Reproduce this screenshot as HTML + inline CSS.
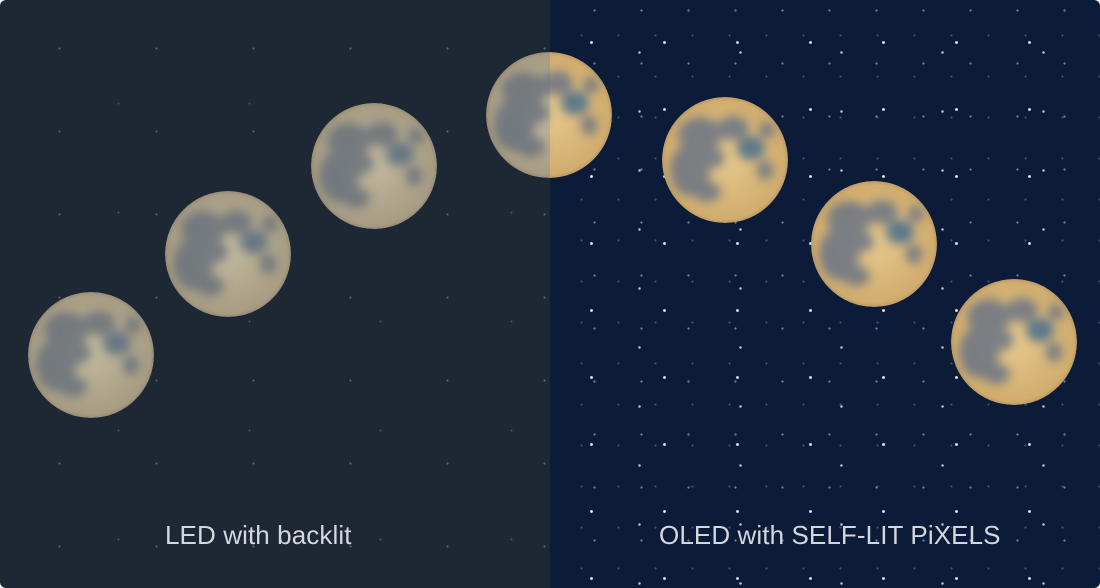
<!DOCTYPE html>
<html><head><meta charset="utf-8"><style>
html,body{margin:0;padding:0;width:1100px;height:588px;overflow:hidden;background:#fff}
.wrap{position:absolute;left:0;top:0;width:1100px;height:588px;border-radius:6px;overflow:hidden}
.l{position:absolute;left:0;top:0;width:550px;height:588px;background:#1e2734;
background-image:radial-gradient(circle,rgba(200,210,225,.35) 0.8px,transparent 1.3px),radial-gradient(circle,rgba(200,210,225,.25) 0.7px,transparent 1.2px);
background-size:97px 83px,131px 109px;background-position:11px 7px,53px 49px}
.r{position:absolute;left:550px;top:0;width:550px;height:588px;background:#0c1b38;
background-image:radial-gradient(circle,rgba(255,255,255,.95) 1px,transparent 1.8px),radial-gradient(circle,rgba(220,235,255,.8) 0.9px,transparent 1.6px),radial-gradient(circle,rgba(180,210,255,.55) 0.8px,transparent 1.4px),radial-gradient(circle,rgba(150,190,240,.35) 0.8px,transparent 1.3px);
background-size:73px 67px,101px 59px,47px 53px,37px 41px;background-position:5px 9px,39px 23px,21px 37px,13px 15px}
svg{position:absolute;left:0;top:0}
.t{position:absolute;top:520px;font-family:"Liberation Sans",sans-serif;font-size:26px;color:#d3d8df;letter-spacing:0.1px}
</style></head><body><div class="wrap">
<div class="l"></div><div class="r"></div>
<svg width="1100" height="588">
<defs>
<radialGradient id="gl" cx="50%" cy="50%" r="55%"><stop offset="0" stop-color="#c2b89d"/><stop offset=".85" stop-color="#a89d84"/><stop offset="1" stop-color="#7d7566"/></radialGradient>
<radialGradient id="gr" cx="50%" cy="50%" r="55%"><stop offset="0" stop-color="#e6c88c"/><stop offset=".85" stop-color="#d1ad6f"/><stop offset="1" stop-color="#9f8152"/></radialGradient>
<filter id="b"><feGaussianBlur stdDeviation="5"/></filter>
<clipPath id="c"><circle r="63"/></clipPath>
<g id="ml" clip-path="url(#c)"><circle r="63" fill="url(#gl)"/><g filter="url(#b)" fill="#656e7a" opacity=".8">
<ellipse cx="-25" cy="-25" rx="22" ry="18"/><ellipse cx="-35" cy="10" rx="20" ry="26"/><ellipse cx="8" cy="-32" rx="16" ry="12"/><ellipse cx="26" cy="-12" rx="14" ry="12" fill="#576a80"/><ellipse cx="42" cy="-30" rx="8" ry="8"/><ellipse cx="-12" cy="-2" rx="12" ry="10"/><ellipse cx="-18" cy="32" rx="14" ry="10"/><ellipse cx="40" cy="10" rx="8" ry="10"/></g></g>
<g id="mr" clip-path="url(#c)"><circle r="63" fill="url(#gr)"/><g filter="url(#b)" fill="#637085" opacity=".8">
<ellipse cx="-25" cy="-25" rx="22" ry="18"/><ellipse cx="-35" cy="10" rx="20" ry="26"/><ellipse cx="8" cy="-32" rx="16" ry="12"/><ellipse cx="26" cy="-12" rx="14" ry="12" fill="#3e6790"/><ellipse cx="42" cy="-30" rx="8" ry="8"/><ellipse cx="-12" cy="-2" rx="12" ry="10"/><ellipse cx="-18" cy="32" rx="14" ry="10"/><ellipse cx="40" cy="10" rx="8" ry="10"/></g></g>
<clipPath id="lh"><rect x="0" y="0" width="550" height="588"/></clipPath>
<clipPath id="rh"><rect x="550" y="0" width="550" height="588"/></clipPath>
</defs>
<use href="#ml" x="91" y="355"/>
<use href="#ml" x="228" y="254"/>
<use href="#ml" x="374" y="166"/>
<g clip-path="url(#lh)"><use href="#ml" x="549" y="115"/></g>
<g clip-path="url(#rh)"><use href="#mr" x="549" y="115"/></g>
<use href="#mr" x="725" y="160"/>
<use href="#mr" x="874" y="244"/>
<use href="#mr" x="1014" y="342"/>
</svg>
<div class="t" style="left:165px">LED with backlit</div>
<div class="t" style="left:659px">OLED with SELF-LIT PiXELS</div>
</div></body></html>
